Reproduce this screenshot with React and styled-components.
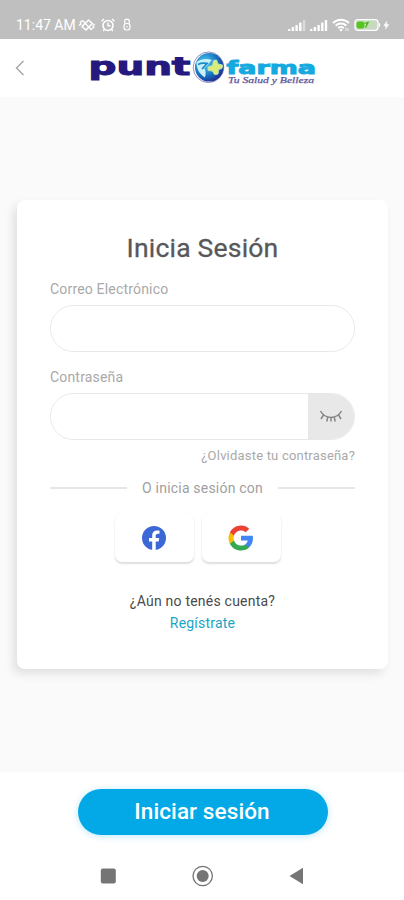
import React from "react";
import styled, { createGlobalStyle } from "styled-components";

const GlobalStyle = createGlobalStyle`
  * {
    box-sizing: border-box;
  }
  body {
    margin: 0;
    background: #fff;
    font-family: Roboto, "Noto Sans", sans-serif;
  }
  button {
    border: none;
    padding: 0;
    font-family: inherit;
    cursor: pointer;
  }
  svg {
    display: block;
    flex: none;
  }
`;

const Screen = styled.div`
  display: flex;
  flex-direction: column;
  width: 404px;
  height: 900px;
  overflow: hidden;
`;

const StatusBar = styled.div`
  display: flex;
  align-items: center;
  justify-content: space-between;
  height: 39px;
  padding: 11px 14px 0 16px;
  background: #bfbfbf;
  color: #fff;
`;

const StatusGroup = styled.div`
  display: flex;
  align-items: center;
  gap: ${({ gap }) => gap}px;
`;

const Clock = styled.span`
  width: 58px;
  font-size: 14px;
  line-height: 16px;
  white-space: nowrap;
`;

const Header = styled.header`
  display: flex;
  align-items: center;
  gap: 62px;
  height: 58px;
  padding-left: 14px;
  background: #fff;
`;

const BackButton = styled.button`
  background: none;
`;

const Main = styled.main`
  flex: 1;
  padding: 103px 16px 0 17px;
  background: #fafafa;
`;

const Card = styled.form`
  display: flex;
  flex-direction: column;
  height: 469px;
  padding: 31px 33px 0 33px;
  border-radius: 8px;
  background: #fff;
  box-shadow: -4px 5px 10px rgba(0, 0, 0, 0.1);
`;

const Title = styled.h1`
  margin: 0 0 16px;
  color: #58585a;
  font-size: 26.5px;
  font-weight: 400;
  line-height: 33px;
  letter-spacing: 0.2px;
  text-align: center;
  -webkit-text-stroke: 0.3px #58585a;
`;

const Label = styled.label`
  height: 20px;
  margin-bottom: 5px;
  color: #a9a9a9;
  font-size: 14px;
  line-height: 19px;
  letter-spacing: 0.18px;
`;

const Field = styled.div`
  display: flex;
  height: 47px;
  margin-bottom: ${({ last }) => (last ? 6 : 16)}px;
  border: 1px solid #e8e8e8;
  border-radius: 24px;
  overflow: hidden;
`;

const Input = styled.input`
  flex: 1;
  min-width: 0;
  padding: 0 18px;
  border: none;
  outline: none;
  background: #fff;
  font-size: 14px;
`;

const EyeButton = styled.button`
  display: flex;
  align-items: center;
  justify-content: center;
  width: 46px;
  background: #e8e8e8;
`;

const Forgot = styled.a`
  align-self: flex-end;
  color: #a9a9a9;
  font-size: 13px;
  line-height: 19px;
  letter-spacing: 0.2px;
`;

const Divider = styled.div`
  display: flex;
  align-items: center;
  justify-content: space-between;
  height: 20px;
  margin-top: 13px;
  color: #a0a0a0;
  font-size: 14px;
  letter-spacing: 0.2px;

  &::before,
  &::after {
    content: "";
    width: 77px;
    height: 2px;
    background: #e6e6e6;
  }
`;

const SocialRow = styled.div`
  display: flex;
  justify-content: center;
  gap: 8px;
  margin-top: 15px;
  padding-right: 10px;
`;

const SocialButton = styled.button`
  display: flex;
  align-items: center;
  justify-content: center;
  width: 79px;
  height: 49px;
  border-radius: 7px;
  background: #fff;
  box-shadow: 0 2px 2px rgba(0, 0, 0, 0.13), 0 0 2px rgba(0, 0, 0, 0.04);
`;

const Question = styled.p`
  margin: 29px 0 0;
  color: #4a4a4a;
  font-size: 14px;
  line-height: 21px;
  letter-spacing: 0.22px;
  text-align: center;
`;

const Register = styled.a`
  align-self: center;
  color: #1ba5c4;
  font-size: 14px;
  line-height: 22px;
  letter-spacing: 0.2px;
`;

const Footer = styled.footer`
  display: flex;
  justify-content: center;
  height: 80px;
  padding: 17px 0 0 1px;
  background: #fff;
`;

const SubmitButton = styled.button`
  width: 250px;
  height: 46px;
  padding: 0 1px 2px 0;
  border-radius: 23px;
  background: #03a9e6;
  color: #fff;
  font-size: 22.5px;
  font-weight: 500;
  line-height: 44px;
  letter-spacing: 0.1px;
  box-shadow: 0 1px 7px rgba(3, 169, 230, 0.28);
`;

const SystemNav = styled.nav`
  display: flex;
  align-items: center;
  justify-content: space-between;
  height: 48px;
  padding: 0 100px;
  background: #fff;
`;

const Vibrate = () => (
  <svg width="18" height="16" viewBox="0 0 18 16" fill="none" stroke="#fff">
    <path d="M4 9.500 10.500 3l3.800 3.500L8 13z" strokeWidth="1.500" />
    <path
      d="M1 8.500 3 7l-.8-1.800L4.500 3.500M17 7l-2 1.500.8 1.800-2.300 1.700M4.500 3.500l9 9.500"
      strokeWidth="1.300"
    />
  </svg>
);

const Alarm = () => (
  <svg width="16" height="16" viewBox="0 0 16 16" fill="none" stroke="#fff">
    <circle cx="8" cy="8.500" r="5" strokeWidth="1.600" />
    <path d="M8 5.500v3.200h2.500M1.500 4.200 4 2M14.500 4.200 12 2M4.500 12.500 3 14M11.500 12.500 13 14" strokeWidth="1.400" />
  </svg>
);

const Lock = () => (
  <svg width="14" height="14" viewBox="-3 0 14 14" fill="none" stroke="#fff" strokeWidth="1.200">
    <path d="M1.700 5.500V3.500a2.300 2.300 0 0 1 4.600 0v2" />
    <rect x="1" y="5.500" width="6" height="6.500" rx="2.400" />
    <path d="M4 8v1.500" />
  </svg>
);

const Signal = ({ bars }) => (
  <svg width="18" height="12" viewBox="0 0 18 12" fill="#fff">
    {[2, 4, 6, 8.5, 11].map((h, i) => (
      <rect
        key={h}
        x={i * 3.7}
        y={12 - h}
        width="2.400"
        height={h}
        rx="0.600"
        opacity={i < bars ? 1 : 0.45}
      />
    ))}
  </svg>
);

const Wifi = () => (
  <svg width="18" height="14" viewBox="0 0 18 14" fill="none" stroke="#fff">
    <path
      d="M1 5a11.500 11.500 0 0 1 16 0M3.600 7.700a7.800 7.800 0 0 1 10.800 0M6.200 10.200a4 4 0 0 1 5.600 0"
      strokeWidth="1.900"
    />
    <circle cx="9" cy="12" r="1.300" fill="#fff" stroke="none" />
    <path d="M14 10v3M16 10v3" strokeWidth="0.700" />
  </svg>
);

const Battery = () => (
  <svg width="36" height="14" viewBox="0 0 36 14">
    <rect x="1" y="1.700" width="23" height="10.600" rx="3" fill="#c9d8c2" stroke="#fff" strokeWidth="1.300" />
    <path d="M25 4.500q2.500 2.500 0 5z" fill="#fff" />
    <rect x="2.500" y="3.500" width="8" height="7" rx="2.500" fill="#55c51e" />
    <path d="M10.500 3.500h6l-3 7h-3z" fill="#b5e6a0" />
    <path d="m10.500 5.500 3.500-1-2.500 5" fill="none" stroke="#45b31a" strokeWidth="1.300" />
    <path d="m32.800 3.300-3 4.500h2.200l-.5 3.300 3.300-4.700h-2.300z" fill="#fff" stroke="#fff" strokeWidth="0.500" />
  </svg>
);

const Logo = () => (
  <svg width="230" height="40" viewBox="88 49 230 40">
    <defs>
      <radialGradient id="globe" cx="0.350" cy="0.350" r="0.750">
        <stop offset="0" stopColor="#4fd0f5" />
        <stop offset="0.600" stopColor="#1672bf" />
        <stop offset="1" stopColor="#20208a" />
      </radialGradient>
    </defs>
    <text
      x="88.500"
      y="76"
      fontFamily="'DejaVu Sans', sans-serif"
      fontWeight="700"
      fontSize="24"
      fill="#25197f"
      stroke="#25197f"
      strokeWidth="1"
      textLength="102"
      lengthAdjust="spacingAndGlyphs"
    >
      punt
    </text>
    <text
      x="226.500"
      y="74.500"
      fontFamily="'DejaVu Sans', sans-serif"
      fontWeight="700"
      fontSize="17"
      fill="#14a9df"
      stroke="#14a9df"
      strokeWidth="0.900"
      textLength="89.500"
      lengthAdjust="spacingAndGlyphs"
    >
      farma
    </text>
    <circle cx="208.500" cy="68.300" r="15.300" fill="#fff" stroke="#6a5ba8" strokeWidth="0.700" />
    <circle cx="209.300" cy="68.300" r="14.300" fill="url(#globe)" />
    <path
      d="M196.500 63c4-3 10-4 15.500-2-3 2-4.500 7-8 8 2 2 2 6 1 9.500-5-3-8.500-8-8.500-15.500z"
      fill="#c9f0fa"
    />
    <path d="M198 65.500c3-1.500 6-1.500 9-1l-5 5.500" fill="none" stroke="#168dc9" strokeWidth="1.800" />
    <path
      d="m213.500 61.500 3-.5 1.500 4 4.500 1-.5 3.500-3.500 1-.5 4.500-3.500.5-2-3.500-4.500-.5v-3.500l4.500-1.500z"
      fill="#dcec78"
      stroke="#b5e4b5"
      strokeWidth="1"
      strokeLinejoin="round"
    />
    <text
      x="228"
      y="84"
      fontFamily="'Liberation Serif', serif"
      fontSize="8.500"
      fontStyle="italic"
      fill="#5c5498"
      stroke="#5c5498"
      strokeWidth="0.250"
      textLength="86"
      lengthAdjust="spacingAndGlyphs"
    >
      Tu Salud y Belleza
    </text>
  </svg>
);

const ClosedEye = () => (
  <svg width="24" height="16" viewBox="0 0 24 16" fill="none" stroke="#858585" strokeWidth="1.500">
    <path d="M1.500 2C6 10.500 18 10.500 22.500 2M4.500 6 2 10M8.700 8.400 7.800 12.500M15.300 8.400l.9 4.100M12 8.800v3.700M19.500 6 22 10" />
  </svg>
);

const Facebook = () => (
  <svg width="24" height="24" viewBox="0 0 24 24">
    <circle cx="12" cy="12" r="12" fill="#3c68d7" />
    <path
      d="M10.200 24v-8.500H7V12h3.200V9.400c0-3.300 1.900-5 4.800-5 1 0 2 .2 2.500.3v3h-1.700c-1.600 0-2.100 1-2.100 2V12h3.500l-.6 3.500h-2.900V24z"
      fill="#fff"
    />
  </svg>
);

const Google = () => (
  <svg width="26" height="26" viewBox="0 0 48 48">
    <path fill="#4285f4" d="M46.100 24.500c0-1.600-.1-3.100-.4-4.500H24v8.500h12.400c-.5 2.900-2.200 5.300-4.600 6.900v5.700h7.400c4.400-4 6.900-9.900 6.900-16.600z" />
    <path fill="#34a853" d="M24 47c6.200 0 11.400-2 15.200-5.500l-7.400-5.700c-2.100 1.400-4.700 2.200-7.800 2.200-6 0-11.100-4-12.900-9.500H3.500v5.900C7.200 41.900 15 47 24 47z" />
    <path fill="#fbbc05" d="M11.100 28.500a14 14 0 0 1 0-8.900v-5.900H3.500a23 23 0 0 0 0 20.700z" />
    <path fill="#ea4335" d="M24 10.100c3.400 0 6.400 1.200 8.800 3.400l6.500-6.500C35.400 3.300 30.200 1 24 1 15 1 7.200 6.200 3.500 13.700l7.600 5.900C12.900 14.100 18 10.100 24 10.100z" />
  </svg>
);

const App = () => {
  return (
    <Screen>
      <GlobalStyle />
      <StatusBar>
        <StatusGroup gap={4}>
          <Clock>11:47 AM</Clock>
          <Vibrate />
          <Alarm />
          <Lock />
        </StatusGroup>
        <StatusGroup gap={4}>
          <Signal bars={4} />
          <Signal bars={5} />
          <Wifi />
          <Battery />
        </StatusGroup>
      </StatusBar>
      <Header>
        <BackButton type="button" aria-label="Volver">
          <svg width="12" height="16" viewBox="0 0 12 16" fill="none" stroke="#a5a5a5" strokeWidth="1.400">
            <path d="M9.500 1 2.500 8l7 7" />
          </svg>
        </BackButton>
        <Logo />
      </Header>
      <Main>
        <Card>
          <Title>Inicia Sesión</Title>
          <Label htmlFor="email">Correo Electrónico</Label>
          <Field>
            <Input id="email" type="email" />
          </Field>
          <Label htmlFor="password">Contraseña</Label>
          <Field last>
            <Input id="password" type="password" />
            <EyeButton type="button" aria-label="Mostrar">
              <ClosedEye />
            </EyeButton>
          </Field>
          <Forgot>¿Olvidaste tu contraseña?</Forgot>
          <Divider>O inicia sesión con</Divider>
          <SocialRow>
            <SocialButton type="button">
              <Facebook />
            </SocialButton>
            <SocialButton type="button">
              <Google />
            </SocialButton>
          </SocialRow>
          <Question>¿Aún no tenés cuenta?</Question>
          <Register>Regístrate</Register>
        </Card>
      </Main>
      <Footer>
        <SubmitButton type="submit">Iniciar sesión</SubmitButton>
      </Footer>
      <SystemNav>
        <svg width="16" height="16" viewBox="0 0 16 16">
          <rect x="0.800" y="0.500" width="15" height="15" rx="2" fill="#757575" />
        </svg>
        <svg width="22" height="22" viewBox="0 0 22 22">
          <circle cx="10.700" cy="11" r="9.700" fill="none" stroke="#757575" strokeWidth="1.300" />
          <circle cx="10.700" cy="11" r="6" fill="#757575" />
        </svg>
        <svg width="15" height="18" viewBox="0 0 15 18">
          <path d="M14 .8v16.400L.5 9z" fill="#757575" />
        </svg>
      </SystemNav>
    </Screen>
  );
};

export default App;
